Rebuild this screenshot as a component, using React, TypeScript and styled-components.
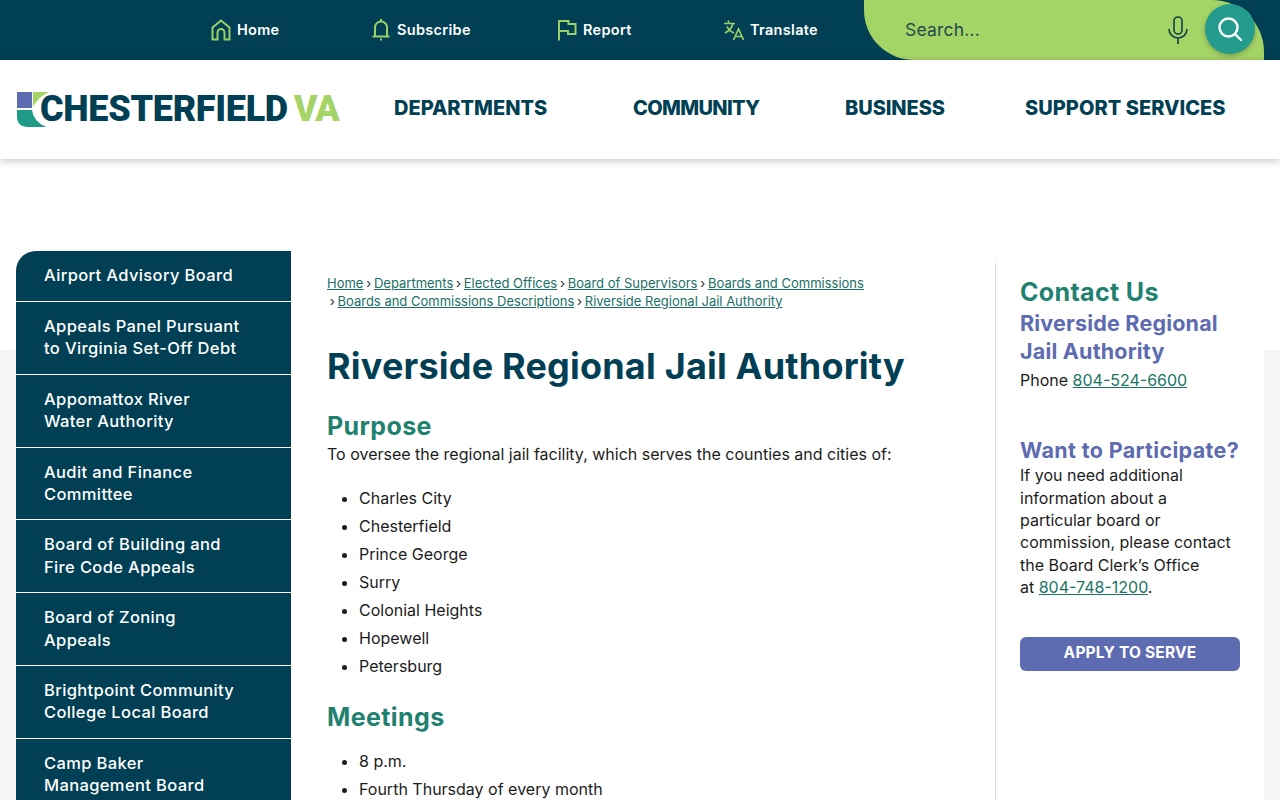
import React from "react";
import styled, { createGlobalStyle } from "styled-components";

const Global = createGlobalStyle`
  html, body { margin: 0; padding: 0; background: #fff; }
  body { font-family: "Inter", "Liberation Sans", sans-serif; color: #1c1c1c; overflow-x: hidden; }
  * { box-sizing: border-box; }
`;
const heading = `"Inter", "Liberation Sans", sans-serif`;

const TopBar = styled.div`
  height: 60px; background: #003f54; display: flex; align-items: stretch; padding-left: 211px; padding-right: 16px;
`;
const TopLinks = styled.nav`display: flex; align-items: center; flex: 1; padding-bottom: 1px;`;
const TopLink = styled.a<{ $w: number }>`
  width: ${p => p.$w}px; display: flex; align-items: center; gap: 6px; color: #fff;
  font: 600 14.5px ${heading}; letter-spacing: 0.3px; white-space: nowrap;
  svg { width: 20px; height: 22px; color: #9bcf68; flex: none; }
`;
const SearchBox = styled.div`
  width: 400px; background: #a5d466; border-radius: 0 52px 0 50px; display: flex; align-items: center;
  padding: 0 9px 2px 41px;
`;
const SearchText = styled.span`flex: 1; font: 400 17.5px ${heading}; color: #1f4a4c; letter-spacing: 0.2px;`;
const Mic = styled.span`display: flex; margin: 2px 17px 0 0; color: #0f4045; svg { display: block; }`;
const SearchButton = styled.button`
  width: 50px; height: 50px; border: 0; border-radius: 50%; background: #239c8e; color: #fff; padding: 0;
  display: flex; align-items: center; justify-content: center; box-shadow: 0 2px 5px rgba(0,0,0,.25);
`;
const MainHeader = styled.header`
  height: 99px; background: #fff; box-shadow: 0 2px 8px rgba(0,0,0,.22); display: flex; align-items: center;
  padding: 0 0 3px 16px; position: relative;
`;
const Logo = styled.a`display: flex; align-items: center; width: 378px; flex: none; height: 36px; margin-top: 1px;`;
const LogoText = styled.span`
  font: 900 36px "Roboto", "Liberation Sans", sans-serif; color: #003f54; letter-spacing: -0.3px; margin-left: -12px; white-space: nowrap;
`;
const LogoVa = styled.span`color: #a5d466; margin-left: 6px; letter-spacing: -1px;`;
const MainNav = styled.nav`display: flex; align-items: center;`;
const MainLink = styled.a<{ $w: number; $ls: number }>`
  width: ${p => p.$w}px; color: #003f54; font: 800 20px ${heading}; white-space: nowrap; letter-spacing: ${p => p.$ls}px;
`;
const Spacer = styled.div`height: 92px; background: #fff;`;
const Page = styled.div`
  background: linear-gradient(#fff 99px, #f5f5f5 99px); padding: 0 16px; 
`;
const Shell = styled.div`background: #fff; display: flex; align-items: flex-start;`;
const Side = styled.aside`width: 275px; flex: none; margin-right: 36px;`;
const SideItem = styled.a`
  display: block; background: #003f54; color: #fff; padding: 13px 30px 14px 28px; font: 500 16.5px/22.4px ${heading};
  letter-spacing: 0.37px; border-bottom: 1px solid #fff; white-space: nowrap;
  &:first-child { border-top-left-radius: 20px; padding-bottom: 14.6px; }
`;
const Main = styled.main`width: 668px; padding-top: 23px; flex: none;`;
const Crumbs = styled.div`font-size: 13px; line-height: 18px; color: #1f2a2a;`;
const CrumbLink = styled.a`color: #1a6f66; text-decoration: underline;`;
const Sep = styled.span`margin: 0 2.75px;`;
const Title = styled.h1`font: 700 36px/44px ${heading}; color: #003f54; margin: 34px 0 23px; letter-spacing: 0.2px;`;
const H2 = styled.h2`font: 700 25px/30px ${heading}; color: #1f8270; margin: 0; letter-spacing: 0.4px;`;
const Body = styled.p`font-size: 16px; line-height: 22px; margin: 2px 0 19px;`;
const List = styled.ul`margin: 0 0 22px; padding-left: 32px; font-size: 16px; line-height: 28px;`;
const MeetingList = styled(List)`margin-top: 15px;`;
const Aside = styled.aside`
  flex: none; width: 269px; margin-top: 12px; border-left: 1px solid #dcdcdc; padding: 14px 24px 0 24px; min-height: 560px;
`;
const Contact = styled.h2`font: 700 25px/30px ${heading}; color: #1f8270; margin: 0 0 2px; letter-spacing: 0.35px;`;
const Sub = styled.h3`font: 700 21.5px/28px ${heading}; color: #5d6bb0; margin: 0; letter-spacing: 0.2px;`;
const Phone = styled.p`font-size: 16px; line-height: 22.4px; margin: 4px 0 0;`;
const Text = styled.p`font-size: 16px; line-height: 22.4px; margin: -0.3px 0 0;`;
const Tel = styled.a`color: #1a7565; text-decoration: underline;`;
const Sub2 = styled(Sub)`margin-top: 45px; letter-spacing: 0.35px; white-space: nowrap;`;
const Apply = styled.a`
  display: block; margin-top: 38px; height: 34px; background: #5d6bb0; color: #fff; border-radius: 6px; text-align: center;
  font: 700 15.5px/32px ${heading}; letter-spacing: 0.2px;
`;

const HomeIcon = () => (
  <svg viewBox="0 0 20 22" fill="none" stroke="currentColor" strokeWidth="2"><path d="M1.500 20.500V8.500L10 1.500l8.500 7v12h-5v-7a3.500 3.500 0 0 0-7 0v7z" /></svg>
);
const BellIcon = () => (
  <svg viewBox="0 0 20 22" fill="none" stroke="currentColor" strokeWidth="2"><path d="M1.500 17.500h17M4 17.500V8.500a6 6 0 0 1 12 0v9M10 0v2.500M9 20.500h2" /></svg>
);
const FlagIcon = () => (
  <svg viewBox="0 0 20 22" fill="none" stroke="currentColor" strokeWidth="2"><path d="M2 21.500V2h9.500v3h7v10h-7.500v-3H2" /></svg>
);
const TranslateIcon = () => (
  <svg viewBox="0 0 20 22" fill="none" stroke="currentColor" strokeWidth="1.700"><path d="M0 4.500h11M4.500 1.500v3M9 4.500C8 8.500 5 12 1 14M3 7.500c1 2.500 4 5 7 6.500M9.500 21 14.500 10l5 11M11 17.500h7" /></svg>
);
const MicIcon = () => (
  <svg width="20" height="28" viewBox="0 0 20 28" fill="none" stroke="currentColor" strokeWidth="1.600"><rect x="6" y="1" width="8" height="17" rx="4" /><path d="M1 13a9 9 0 0 0 18 0M10 22v6" /></svg>
);
const SearchIcon = () => (
  <svg width="26" height="26" viewBox="0 0 26 26" fill="none" stroke="currentColor" strokeWidth="2.400" strokeLinecap="round"><circle cx="11.500" cy="11.500" r="9" /><path d="m18 18 6 6" /></svg>
);
const LogoMark = () => (
  <svg width="36" height="36" viewBox="0 0 36 36" style={{ flex: "none" }}>
    <path d="M1 1H16V17H1z" fill="#5d6bb0" />
    <path d="M17 1H33Q22 6 17 16z" fill="#a5d466" />
    <path d="M1 19H16Q17 30 30 36H12Q1 36 1 25z" fill="#1f9c88" />
  </svg>
);

const sideItems = [
  ["Airport Advisory Board"],
  ["Appeals Panel Pursuant", "to Virginia Set-Off Debt"],
  ["Appomattox River", "Water Authority"],
  ["Audit and Finance", "Committee"],
  ["Board of Building and", "Fire Code Appeals"],
  ["Board of Zoning", "Appeals"],
  ["Brightpoint Community", "College Local Board"],
  ["Camp Baker", "Management Board"],
];
const crumbs1 = ["Home", "Departments", "Elected Offices", "Board of Supervisors", "Boards and Commissions"];

export default function App() {
  return (
    <>
      <Global />
      <TopBar>
        <TopLinks>
          <TopLink $w={160}><HomeIcon />Home</TopLink>
          <TopLink $w={186}><BellIcon />Subscribe</TopLink>
          <TopLink $w={167}><FlagIcon />Report</TopLink>
          <TopLink $w={120}><TranslateIcon />Translate</TopLink>
        </TopLinks>
        <SearchBox>
          <SearchText>Search...</SearchText>
          <Mic><MicIcon /></Mic>
          <SearchButton aria-label="Search"><SearchIcon /></SearchButton>
        </SearchBox>
      </TopBar>
      <MainHeader>
        <Logo>
          <LogoMark />
          <LogoText>CHESTERFIELD<LogoVa>VA</LogoVa></LogoText>
        </Logo>
        <MainNav>
          <MainLink $w={239} $ls={0}>DEPARTMENTS</MainLink>
          <MainLink $w={212} $ls={-0.65}>COMMUNITY</MainLink>
          <MainLink $w={180} $ls={-0.1}>BUSINESS</MainLink>
          <MainLink $w={210} $ls={0.03}>SUPPORT SERVICES</MainLink>
        </MainNav>
      </MainHeader>
      <Spacer />
      <Page>
        <Shell>
          <Side>
            {sideItems.map(lines => (
              <SideItem key={lines[0]}>
                {lines.map((l, i) => <React.Fragment key={l}>{i > 0 && <br />}{l}</React.Fragment>)}
              </SideItem>
            ))}
          </Side>
          <Main>
            <Crumbs>
              {crumbs1.map((c, i) => (
                <React.Fragment key={c}>{i > 0 && <Sep>›</Sep>}<CrumbLink>{c}</CrumbLink></React.Fragment>
              ))}
              <br />
              <Sep>›</Sep><CrumbLink>Boards and Commissions Descriptions</CrumbLink>
              <Sep>›</Sep><CrumbLink>Riverside Regional Jail Authority</CrumbLink>
            </Crumbs>
            <Title>Riverside Regional Jail Authority</Title>
            <H2>Purpose</H2>
            <Body>To oversee the regional jail facility, which serves the counties and cities of:</Body>
            <List>
              {["Charles City", "Chesterfield", "Prince George", "Surry", "Colonial Heights", "Hopewell", "Petersburg"].map(x => <li key={x}>{x}</li>)}
            </List>
            <H2>Meetings</H2>
            <MeetingList>
              <li>8 p.m.</li>
              <li>Fourth Thursday of every month</li>
            </MeetingList>
          </Main>
          <Aside>
            <Contact>Contact Us</Contact>
            <Sub>Riverside Regional<br />Jail Authority</Sub>
            <Phone>Phone <Tel>804-524-6600</Tel></Phone>
            <Sub2>Want to Participate?</Sub2>
            <Text>If you need additional<br />information about a<br />particular board or<br />commission, please contact<br />the Board Clerk’s Office<br />at <Tel>804-748-1200</Tel>.</Text>
            <Apply>APPLY TO SERVE</Apply>
          </Aside>
        </Shell>
      </Page>
    </>
  );
}
